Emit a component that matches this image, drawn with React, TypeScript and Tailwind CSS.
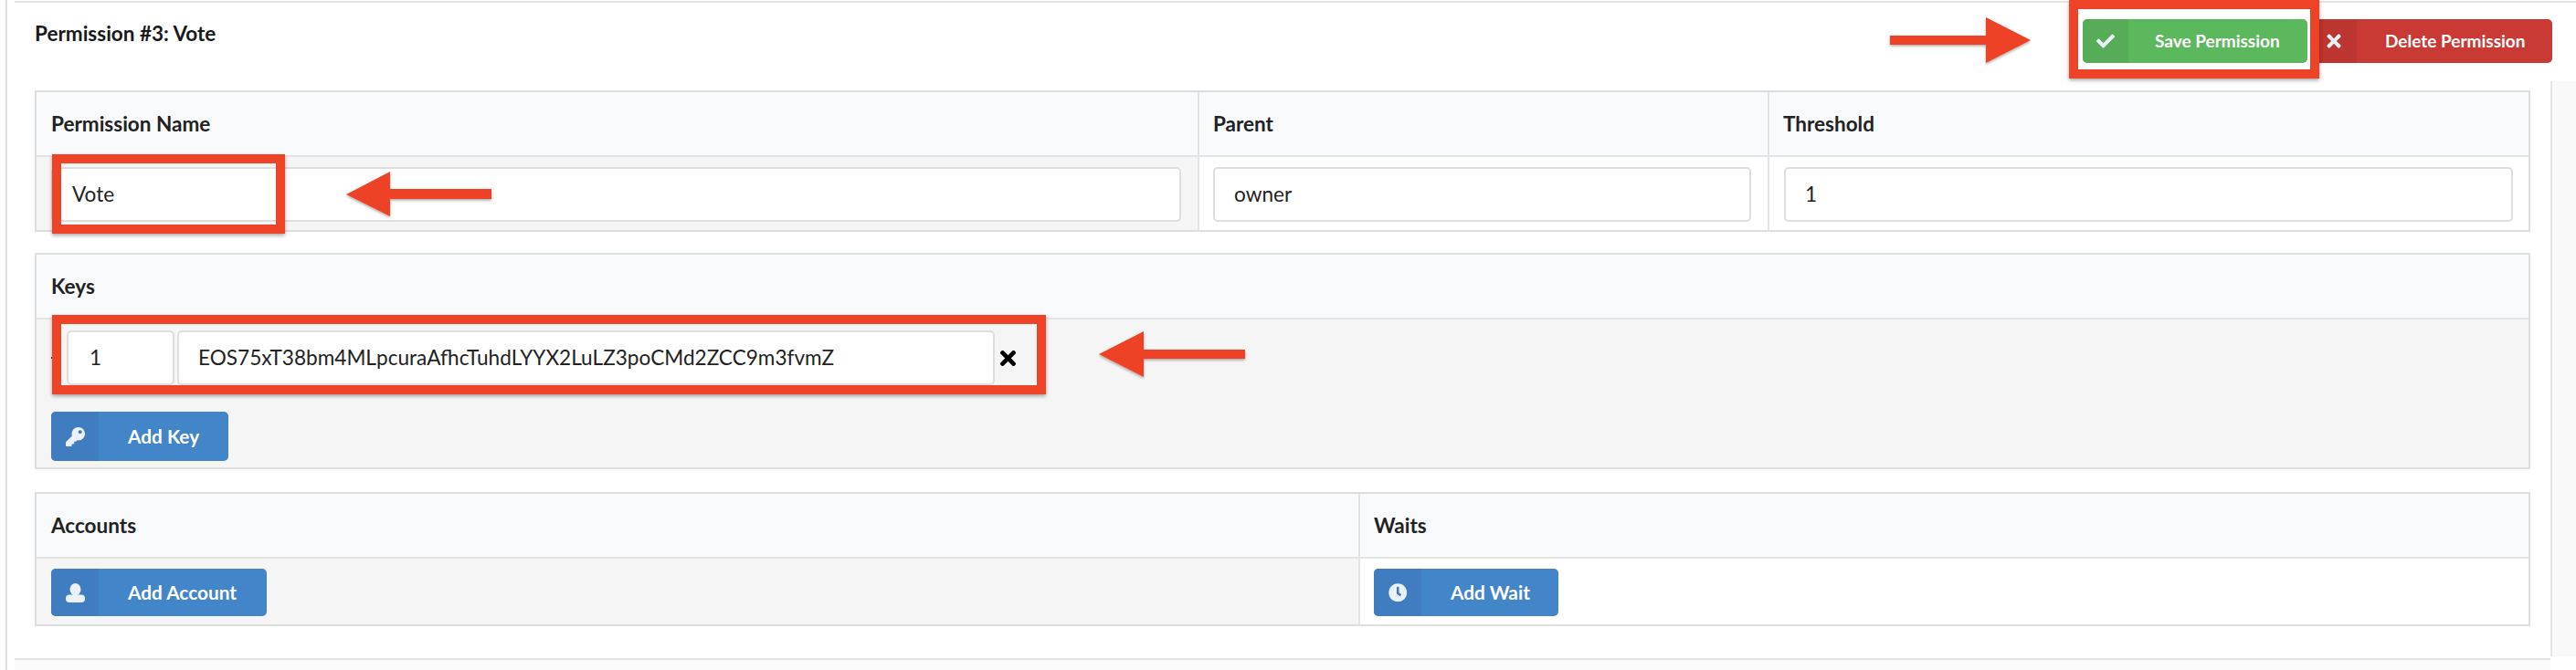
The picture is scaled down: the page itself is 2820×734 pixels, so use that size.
import React from 'react';
import { FaCheck, FaTimes, FaKey, FaClock } from 'react-icons/fa';

const font = { fontFamily: 'Lato, sans-serif' };

type IconButtonProps = {
    icon: React.ReactNode;
    label: string;
    className: string;
    iconClass: string;
    textClass: string;
};

const IconButton: React.FC<IconButtonProps> = ({ icon, label, className, iconClass, textClass }) => (
    <div className={`flex shrink-0 overflow-hidden rounded-[5px] font-bold text-white ${className}`}>
        <div className={`flex shrink-0 items-center justify-center text-[#eaf1f8] ${iconClass}`}>{icon}</div>
        <div className={`flex items-center whitespace-nowrap ${textClass}`}>{label}</div>
    </div>
);

const TextInput: React.FC<{ value: string; className: string }> = ({ value, className }) => (
    <div className={`flex h-[60px] items-center rounded-[5px] border-2 border-[#dedede] bg-white text-[22.6px] text-[#222222] ${className}`}>
        {value}
    </div>
);

const HeaderCell: React.FC<{ label: string; className?: string }> = ({ label, className = '' }) => (
    <div className={`flex h-[71px] items-center border-b-2 border-[#e4e4e4] bg-[#f9fafb] text-[22.5px] font-bold text-[#222222] ${className}`}>{label}</div>
);

const UserIcon = () => (
    <svg width="21" height="21" viewBox="0 0 21 21" fill="currentColor">
        <ellipse cx="10.5" cy="6.8" rx="6" ry="6.8" />
        <rect x="0" y="12.5" width="21" height="8.5" rx="4" />
    </svg>
);

export default function App() {
    return (
        <div className="relative h-[734px] w-[2820px] overflow-hidden bg-white" style={font}>
            <div className="flex h-full pl-[6px]">
                <div className="h-full w-[2px] shrink-0 bg-[#e0e0e0]" />
                <div className="mt-[1px] ml-[8px] flex flex-1 border-t-2 border-[#e4e4e4]">
                    <div className="flex w-[2776px] shrink-0 flex-col">
                        <div className="h-[718px] shrink-0 pt-[18px]">
                            <div className="flex h-[48px] w-[2778px] items-start justify-between pl-[22px]">
                                <div className="-mt-[1px] text-[22.5px] font-bold text-[#1a1a1a]">Permission #3: Vote</div>
                                <div className="flex gap-[4px]">
                                    <IconButton
                                        icon={<FaCheck className="text-[20px]" />}
                                        label="Save Permission"
                                        className="h-[48px] w-[246px] bg-[#5cb85c] text-[19px]"
                                        iconClass="w-[50px] bg-[#57ad57]"
                                        textClass="pl-[29px]"
                                    />
                                    <IconButton
                                        icon={<FaTimes className="text-[22px]" />}
                                        label="Delete Permission"
                                        className="h-[48px] w-[264px] bg-[#c93a34] text-[19px]"
                                        iconClass="w-[50px] bg-[#bc3530]"
                                        textClass="pl-[31px]"
                                    />
                                </div>
                            </div>

                            <div className="mt-[30px] ml-[22px] grid h-[155px] w-[2732px] grid-cols-[1271px_624px_833px] grid-rows-[71px_80px] border-2 border-[#dedede]">
                                <HeaderCell label="Permission Name" className="pl-[16px]" />
                                <HeaderCell label="Parent" className="border-l-2 pl-[15px]" />
                                <HeaderCell label="Threshold" className="border-l-2 pl-[15px]" />
                                <div className="bg-[#f5f5f5] pt-[11px] pr-[18px] pl-[16px]">
                                    <TextInput value="Vote" className="w-full pl-[21px]" />
                                </div>
                                <div className="border-l-2 border-[#e4e4e4] pt-[11px] pr-[18px] pl-[15px]">
                                    <TextInput value="owner" className="w-full pl-[21px]" />
                                </div>
                                <div className="border-l-2 border-[#e4e4e4] pt-[11px] pr-[17px] pl-[16px]">
                                    <TextInput value="1" className="w-full pl-[21px]" />
                                </div>
                            </div>

                            <div className="mt-[23px] ml-[22px] h-[237px] w-[2732px] border-2 border-[#dedede]">
                                <HeaderCell label="Keys" className="pl-[16px]" />
                                <div className="h-[162px] bg-[#f5f5f5] pt-[12px] pl-[16px]">
                                    <div className="flex h-[60px] items-center">
                                        <div className="mr-[14px] h-[2px] w-[3px] shrink-0 bg-[#333333]" />
                                        <TextInput value="1" className="w-[118px] shrink-0 pl-[23px]" />
                                        <div className="w-[3px]" />
                                        <TextInput value="EOS75xT38bm4MLpcuraAfhcTuhdLYYX2LuLZ3poCMd2ZCC9m3fvmZ" className="w-[895px] shrink-0 pl-[21px]" />
                                        <FaTimes className="ml-[2px] text-[25px] text-black" />
                                    </div>
                                    <div className="mt-[29px]">
                                        <IconButton
                                            icon={<FaKey className="text-[21px]" />}
                                            label="Add Key"
                                            className="h-[54px] w-[194px] bg-[#4285c9] text-[20.8px]"
                                            iconClass="w-[52px] bg-[#3f7dc0]"
                                            textClass="pl-[32px]"
                                        />
                                    </div>
                                </div>
                            </div>

                            <div className="mt-[25px] ml-[22px] grid h-[147px] w-[2732px] grid-cols-[1447px_1281px] grid-rows-[71px_72px] border-2 border-[#dedede]">
                                <HeaderCell label="Accounts" className="pl-[16px]" />
                                <HeaderCell label="Waits" className="border-l-2 pl-[15px]" />
                                <div className="bg-[#f5f5f5] pt-[11px] pl-[16px]">
                                    <IconButton
                                        icon={<UserIcon />}
                                        label="Add Account"
                                        className="h-[52px] w-[236px] bg-[#4285c9] text-[20.8px]"
                                        iconClass="w-[52px] bg-[#3f7dc0]"
                                        textClass="pl-[32px]"
                                    />
                                </div>
                                <div className="border-l-2 border-[#e4e4e4] pt-[11px] pl-[15px]">
                                    <IconButton
                                        icon={<FaClock className="text-[20.5px]" />}
                                        label="Add Wait"
                                        className="h-[52px] w-[202px] bg-[#4285c9] text-[20.8px]"
                                        iconClass="w-[52px] bg-[#3f7dc0]"
                                        textClass="pl-[32px]"
                                    />
                                </div>
                            </div>
                        </div>
                        <div className="flex-1 border-t-2 border-[#e4e4e4] bg-[#fafafa]" />
                    </div>
                    <div className="mt-[86px] h-[630px] flex-1 border-l-2 border-[#e4e4e4] bg-[#f9f9f9]" />
                </div>
            </div>

            {/* annotations drawn over the page */}
            <div className="absolute top-0 left-[2265px] h-[86px] w-[274px] border-[10px] border-[#ee4326] shadow-[0_2px_4px_rgba(0,0,0,0.35)]" />
            <div className="absolute top-[169px] left-[57px] h-[87px] w-[255px] border-[10px] border-[#ee4326] shadow-[0_2px_4px_rgba(0,0,0,0.35)]" />
            <div className="absolute top-[345px] left-[57px] h-[87px] w-[1088px] border-[10px] border-[#ee4326] shadow-[0_2px_4px_rgba(0,0,0,0.35)]" />
            <svg className="absolute top-0 left-0" width="2820" height="734">
                <defs>
                    <filter id="arrowShadow" x="-10%" y="-20%" width="120%" height="140%">
                        <feDropShadow dx="0" dy="1.5" stdDeviation="1.5" floodColor="#000" floodOpacity="0.35" />
                    </filter>
                </defs>
                <g fill="#ee4326" filter="url(#arrowShadow)">
                    <polygon points="2069,39 2174,39 2174,19 2223,44 2174,69 2174,49 2069,49" />
                    <polygon points="379,213 427,188 427,207 538,207 538,218 427,218 427,237" />
                    <polygon points="1203,388 1252,363 1252,383 1363,383 1363,393 1252,393 1252,413" />
                </g>
            </svg>
        </div>
    );
}
